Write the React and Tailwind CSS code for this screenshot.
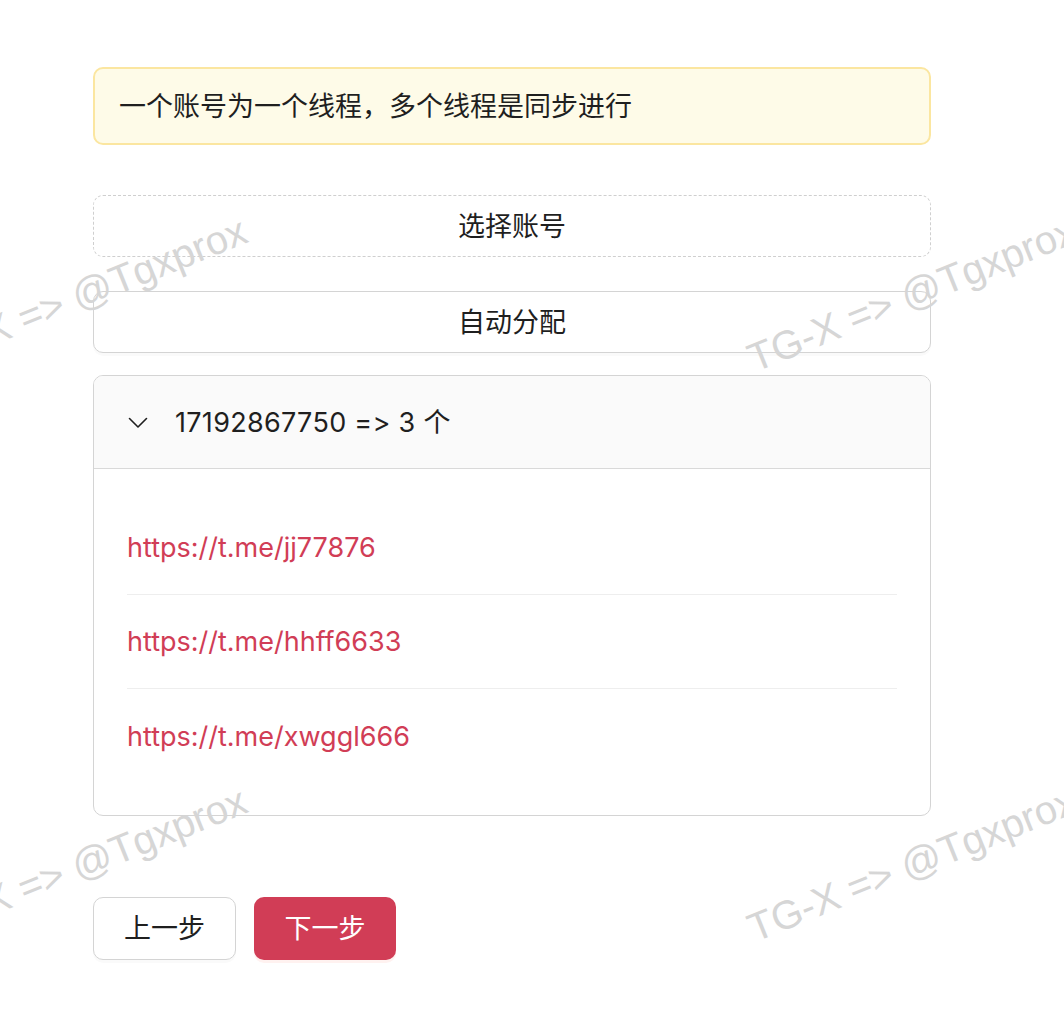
import React from 'react';

const links = [
    'https://t.me/jj77876',
    'https://t.me/hhff6633',
    'https://t.me/xwggl666',
];

const marks = [
    'left-[-72px] top-[338px]',
    'left-[757px] top-[338px]',
    'left-[-72px] top-[908px]',
    'left-[757px] top-[908px]',
];

const Watermark = () => (
    <div className="pointer-events-none absolute inset-0 overflow-hidden">
        {marks.map((pos) => (
            <span
                key={pos}
                className={`absolute ${pos} origin-bottom-left -rotate-[22deg] whitespace-nowrap text-[40px] leading-[40px] text-[#d6d6d6] font-['Liberation_Sans',Arial,sans-serif]`}
            >
                TG-X =&gt; @Tgxprox
            </span>
        ))}
    </div>
);

const App = () => {
    return (
        <div className="relative min-h-[1024px] w-full overflow-hidden bg-white font-['Inter','Noto_Sans_CJK_SC',sans-serif] text-[27px] text-[#1f1f1f] [font-feature-settings:'calt'_0,'liga'_0]">
            <div className="ml-[93px] w-[838px] pt-[67px]">
                {/* notice */}
                <div className="flex h-[78px] items-center rounded-[10px] border-2 border-[#fbe6a0] bg-[#fefbe8] px-[24px] pt-[3px]">
                    一个账号为一个线程，多个线程是同步进行
                </div>

                <button className="mt-[50px] flex h-[62px] w-full items-center justify-center rounded-[10px] border border-dashed border-[#cfcfcf] bg-white pt-[2px]">
                    选择账号
                </button>

                <button className="mt-[34px] flex h-[62px] w-full items-center justify-center rounded-[10px] border border-[#d4d4d4] bg-white pt-[2px] shadow-[0_3px_0_rgba(0,0,0,0.02)]">
                    自动分配
                </button>

                {/* collapse panel */}
                <div className="mt-[22px] overflow-hidden rounded-[10px] border border-[#d4d4d4]">
                    <div className="flex h-[93px] items-center border-b border-[#d9d9d9] bg-[#fafafa] px-[34px] pt-[2px]">
                        <svg width="20" height="12" viewBox="0 0 20 12" fill="none" className="mr-[27px]">
                            <path d="M1.5 1.5 L10 10 L18.5 1.5" stroke="#1f1f1f" strokeWidth="1.6" strokeLinecap="round" strokeLinejoin="round" />
                        </svg>
                        <span className="tracking-[0.3px]">17192867750 =&gt; 3 个</span>
                    </div>

                    <div className="px-[33px] py-[32px]">
                        {links.map((link, i) => (
                            <div
                                key={link}
                                className={`flex h-[94px] items-center pt-[2px] text-[#d13d56] ${i < links.length - 1 ? 'border-b border-[#eeeeee]' : ''}`}
                            >
                                {link}
                            </div>
                        ))}
                    </div>
                </div>

                <div className="mt-[81px] flex gap-[18px]">
                    <button className="flex h-[63px] w-[143px] items-center justify-center rounded-[10px] border border-[#d4d4d4] bg-white pt-[2px] shadow-[0_3px_0_rgba(0,0,0,0.02)]">
                        上一步
                    </button>
                    <button className="flex h-[63px] w-[142px] items-center justify-center rounded-[10px] bg-[#d13d56] pt-[2px] text-white shadow-[0_3px_0_rgba(255,38,5,0.06)]">
                        下一步
                    </button>
                </div>
            </div>

            <Watermark />
        </div>
    );
};

export default App;
